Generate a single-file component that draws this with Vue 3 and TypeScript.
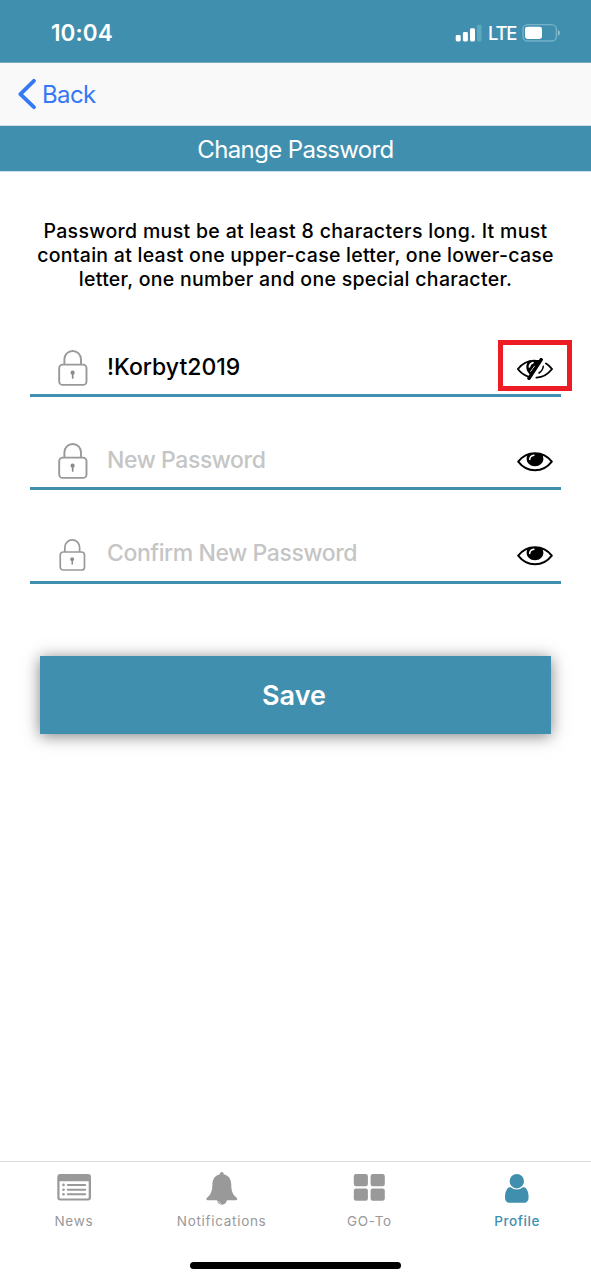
<script setup lang="ts">
import { ref } from 'vue'

interface Field {
  id: string
  placeholder: string
  value: string
  visible: boolean
  small?: boolean
}

const fields = ref<Field[]>([
  { id: 'current', placeholder: 'Current Password', value: '!Korbyt2019', visible: true },
  { id: 'new', placeholder: 'New Password', value: '', visible: false },
  { id: 'confirm', placeholder: 'Confirm New Password', value: '', visible: false, small: true },
])

const tabs = ['News', 'Notifications', 'GO-To', 'Profile']
const activeTab = ref('Profile')
</script>

<template>
  <div class="screen">
    <header class="status">
      <span class="time">10:04</span>
      <div class="indicators">
        <svg class="signal" width="27" height="18" viewBox="0 0 27 18">
          <rect x="0.7" y="11" width="5" height="6.5" rx="1.4" fill="#fff" />
          <rect x="7.9" y="8" width="5" height="9.5" rx="1.4" fill="#fff" />
          <rect x="15" y="4.3" width="5" height="13.2" rx="1.4" fill="#fff" />
          <rect x="22" y="0.8" width="4.6" height="16.7" rx="1.4" fill="#5aa9bf" />
        </svg>
        <span class="lte">LTE</span>
        <svg class="battery" width="40" height="20" viewBox="0 0 40 20">
          <rect x="1" y="1.6" width="33.4" height="16.4" rx="4.6" fill="none" stroke="#74b3c9" stroke-width="1.4" />
          <rect x="3" y="3.8" width="17" height="12.2" rx="2.4" fill="#fff" />
          <path d="M36 7v5.8c2.500-1 2.500-4.800 0-5.800z" fill="#8fc3d4" />
        </svg>
      </div>
    </header>

    <nav class="navbar">
      <svg class="chevron" width="19" height="32" viewBox="0 0 19 32">
        <path d="M15.900 2.800 2.400 16.200l13.500 13" fill="none" stroke="#3478f6" stroke-width="3.800" stroke-linecap="round" stroke-linejoin="round" />
      </svg>
      <span class="back">Back</span>
    </nav>

    <h1 class="title"><span>Change Password</span></h1>

    <main class="content">
      <p class="hint">
        <span class="l1">Password must be at least 8 characters long. It must</span><br>
        <span class="l2">contain at least one upper-case letter, one lower-case</span><br>
        <span class="l3">letter, one number and one special character.</span>
      </p>

      <form class="form" @submit.prevent>
        <div v-for="field in fields" :key="field.id" class="field" :class="[field.id, { small: field.small }]">
          <svg class="lock" viewBox="0 0 30 36" fill="none" stroke="#999" stroke-width="1.900">
            <rect x="1.200" y="14.600" width="27.300" height="20.300" rx="3.500" />
            <path d="M6.400 14.600V9.300a8.300 8.300 0 0 1 16.600 0v5.300" />
            <circle cx="14.600" cy="22.700" r="2.100" fill="#8b8b8b" stroke="none" />
            <path d="M14.700 23v5" stroke="#8b8b8b" stroke-width="1.700" stroke-linecap="round" />
          </svg>
          <input v-model="field.value" class="input" :type="field.visible ? 'text' : 'password'" :placeholder="field.placeholder">
          <button type="button" class="toggle" :class="{ marked: field.visible }" @click="field.visible = !field.visible">
            <svg v-if="field.visible" width="36" height="22" viewBox="0 0 36 22" fill="none" stroke="#000" stroke-width="1.900" stroke-linecap="round">
              <path d="M10.500 18.300C6.500 16.800 3 13.800.9 11 5.200 5.600 11 2.600 17.300 2.600c1.300 0 2.700.2 4 .5" />
              <path d="M29 5.500c2.500 1.400 4.400 3.300 6 5.500-4.300 5.600-10 8.400-15.500 8.600" />
              <path d="M23 2.300 13.200 16.800C10.800 14.600 9.300 12.300 9.300 9c0-2.300.7-4.300 2.200-5.600 3-1.300 8.200-1.700 11.500-1.100z" fill="#000" stroke="none" />
              <path d="M12.400 8.900c.2-2.200 1.500-3.700 3.600-4.200" stroke="#fff" stroke-width="1.700" />
              <path d="M13.700 13.400 17.700 8" stroke="#fff" stroke-width="1" />
              <path d="M24.200 1.600 12 20.200" stroke-width="3.500" />
              <path d="M26.300 8.300c-.2 2.900-1.600 5-4.300 6.700" stroke-width="1.500" />
            </svg>
            <svg v-else width="36" height="20" viewBox="0 0 36 20">
              <path d="M1.200 9.600C5.500 4 11.200 1.200 18 1.200S30.500 4 34.800 9.600C30.500 15.200 24.800 18.200 18 18.200S5.500 15.200 1.200 9.600z" fill="#fff" stroke="#000" stroke-width="2" stroke-linejoin="round" />
              <path d="M10.800 2.300C13 1 23 1 25.200 2.300a8.500 8.500 0 0 1 1.200 4.500c0 4.200-3.700 7.500-8.400 7.500S9.600 11 9.600 6.800c0-1.700.4-3.200 1.200-4.500z" fill="#000" />
              <path d="M12.700 7.400c.2-2.200 1.700-3.700 4.200-4.100" fill="none" stroke="#fff" stroke-width="1.500" stroke-linecap="round" />
            </svg>
          </button>
        </div>
        <button class="save" type="submit"><span>Save</span></button>
      </form>
    </main>

    <footer class="tabbar">
      <div class="tabs">
        <div v-for="tab in tabs" :key="tab" class="tab" :class="{ active: tab === activeTab }" @click="activeTab = tab">
          <svg width="36" height="36" viewBox="0 0 36 36" fill="currentColor">
            <template v-if="tab === 'News'">
              <path fill-rule="evenodd" d="M4.300 4h27.700a3 3 0 0 1 3 3v20.500a3 3 0 0 1-3 3H4.300a3 3 0 0 1-3-3V7a3 3 0 0 1 3-3zM3.500 11.300v16.200c0 .6.300.9.900.9h27.400c.6 0 .9-.3.900-.9V11.300z" />
              <path d="M11.800 14.900h17.400M11.800 19.700h17.400M11.800 24.300h17.400" stroke="currentColor" stroke-width="2" stroke-linecap="round" />
              <circle cx="7.500" cy="14.900" r="1.300" /><circle cx="7.500" cy="19.700" r="1.300" /><circle cx="7.500" cy="24.300" r="1.300" />
            </template>
            <g v-else-if="tab === 'Notifications'" transform="translate(-0.5 0)">
              <path d="M18.300 2a1.800 1.800 0 0 1 1.800 2.300c4.800 1 7.500 4.600 7.600 9.700.1 6.700 1.100 10.300 5.600 14 .9.900.5 2.300-1 2.300H4.300c-1.500 0-1.900-1.400-1-2.300 4.500-3.700 5.500-7.300 5.600-14 .1-5.100 2.800-8.700 7.600-9.700A1.800 1.800 0 0 1 18.300 2z" />
              <path d="M13.600 29.800h9.800a4.900 4.900 0 0 1-9.800 0z" />
              <path d="M15.200 31c.3 1.300 1.200 2.200 2.500 2.500" fill="none" stroke="#fff" stroke-width=".5" />
            </g>
            <template v-else-if="tab === 'GO-To'">
              <rect x="2.800" y="4" width="14.100" height="12.200" rx="2.200" />
              <rect x="19.600" y="4" width="14.200" height="12.200" rx="2.200" />
              <rect x="2.800" y="18.500" width="14.100" height="12.200" rx="2.200" />
              <rect x="19.600" y="18.500" width="14.200" height="12.200" rx="2.200" />
            </template>
            <template v-else>
              <path d="M10.300 17.200h15c2.800 1.100 4.300 5.200 4.300 10.300 0 3.200-1.600 5.300-4.300 5.300h-15C7.600 32.800 6 30.700 6 27.500c0-5.100 1.500-9.200 4.300-10.300z" />
              <circle cx="17.800" cy="11.200" r="7.800" stroke="#fff" stroke-width="1.200" />
            </template>
          </svg>
          <span class="label">{{ tab }}</span>
        </div>
      </div>
      <div class="home-bar"></div>
    </footer>
  </div>
</template>

<style>
body { margin: 0; background: #fff; }
</style>

<style scoped>
.screen {
  width: 591px;
  height: 1280px;
  display: flex;
  flex-direction: column;
  overflow: hidden;
  background: #fff;
  color: #000;
  font-family: Inter, "Liberation Sans", sans-serif;
}
.status {
  height: 62px;
  box-sizing: border-box;
  flex: none;
  display: flex;
  align-items: center;
  justify-content: space-between;
  padding: 3px 29px 0 51px;
  background: #418fae;
  color: #fff;
}
.time { font-size: 22.500px; font-weight: 600; letter-spacing: 0.100px; }
.indicators { display: flex; align-items: center; }
.lte { margin-left: 6px; width: 28px; font-size: 18.500px; font-weight: 500; letter-spacing: -1.300px; }
.battery { margin-left: 6px; }
.navbar {
  height: 64px;
  box-sizing: border-box;
  flex: none;
  display: flex;
  align-items: center;
  padding-left: 18px;
  background: #f9f9f9;
  border-top: 1px solid #7aa9bf;
  border-bottom: 1px solid #d3dfe5;
}
.back { margin-left: 5px; font-size: 24px; letter-spacing: -0.600px; color: #3478f6; }
.title {
  height: 45px;
  box-sizing: border-box;
  flex: none;
  margin: 0;
  padding-top: 2px;
  display: flex;
  align-items: center;
  justify-content: center;
  background: #418fae;
  box-shadow: 0 1px 0 #c9dfe8;
  color: #fff;
  font-size: 24px;
  font-weight: 400;
  letter-spacing: -0.640px;
}
.content { flex: 1; padding: 48px 30px 0; }
.hint {
  margin: 0 -20px;
  text-align: center;
  white-space: nowrap;
  font-size: 19.500px;
  font-weight: 500;
  line-height: 24px;
}
.l1 { letter-spacing: 0.330px; }
.l2 { letter-spacing: 0.270px; }
.l3 { letter-spacing: 0.290px; }
.form { margin-top: 49px; display: flex; flex-direction: column; }
.field {
  height: 57px;
  box-sizing: border-box;
  margin-bottom: 36px;
  display: flex;
  align-items: center;
  border-bottom: 3px solid #418fae;
}
.field.new { margin-bottom: 37px; }
.field.confirm { margin-bottom: 72px; }
.lock { flex: none; width: 30px; height: 36px; margin: 2px 19px 0 28px; }
.small .lock { width: 27px; height: 32px; margin: 1px 21px 0 29px; }
.input {
  flex: 1;
  min-width: 0;
  height: 50px;
  border: 0;
  padding: 0;
  outline: 0;
  background: transparent;
  color: #000;
  font-family: inherit;
  font-size: 23px;
  font-weight: 500;
}
.small .input { margin-top: -2px; }
.input::placeholder { color: #c5c5c5; opacity: 1; letter-spacing: -0.420px; }
.toggle {
  flex: none;
  width: 74px;
  height: 51px;
  box-sizing: border-box;
  margin: 4px -11px 0 0;
  padding: 0;
  display: flex;
  align-items: center;
  justify-content: center;
  border: 5px solid transparent;
  background: transparent;
}
.small .toggle { margin-top: 3px; }
.toggle.marked { border-color: #ed1c24; margin-top: -3px; padding-top: 7px; }
.save {
  height: 78px;
  margin: 0 10px;
  padding: 0 3px 0 0;
  border: 0;
  background: #418fae;
  box-shadow: 0 2px 15px rgba(0, 0, 0, 0.500);
  color: #fff;
  font-family: inherit;
  font-size: 27px;
  font-weight: 600;
}
.tabbar {
  height: 119px;
  box-sizing: border-box;
  flex: none;
  border-top: 1px solid #ddd;
  background: #fff;
}
.tabs { display: grid; grid-template-columns: repeat(4, 1fr); height: 99.500px; }
.tab {
  padding-top: 8px;
  display: flex;
  flex-direction: column;
  align-items: center;
  color: #999;
}
.tab.active { color: #418fae; }
.label { margin-top: 7px; font-size: 13.500px; line-height: 16px; letter-spacing: 0.700px; }
.active .label { font-weight: 500; letter-spacing: 0.600px; }
.home-bar { width: 211px; height: 7px; margin: 0 auto; border-radius: 4px; background: #000; }
</style>
